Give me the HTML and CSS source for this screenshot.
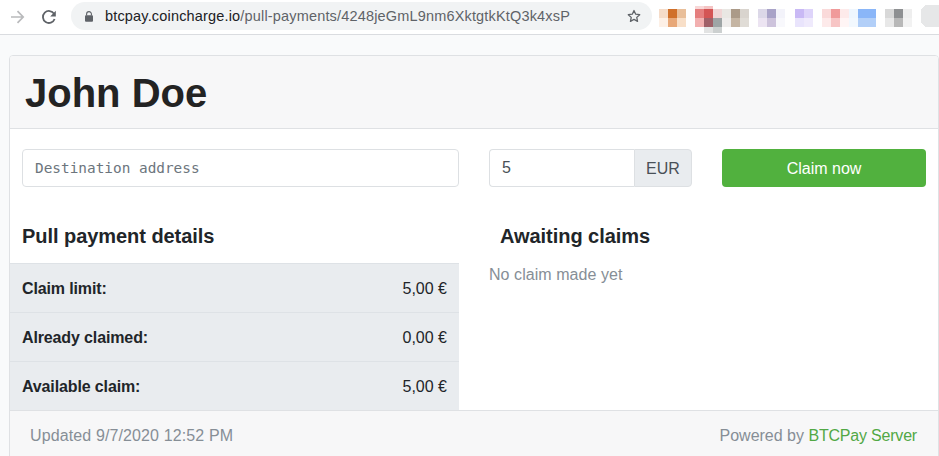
FILE: index.html
```html
<!DOCTYPE html>
<html lang="en">
<head>
<meta charset="utf-8">
<title>John Doe</title>
<link rel="stylesheet" href="styles.css">
</head>
<body>
<div class="toolbar">
  <svg class="nav-icon" width="16" height="16" viewBox="0 0 16 16"><path d="M2 8h12M8.5 2.2 14.2 8l-5.7 5.8" fill="none" stroke="#b9babc" stroke-width="1.7"/></svg>
  <svg class="nav-icon reload" width="16" height="16" viewBox="0 0 16 16"><path d="M13.6 10a6 6 0 1 1-.5-5.1" fill="none" stroke="#5f6368" stroke-width="1.8"/><path d="M14.8 1.8v5.6H9.2z" fill="#5f6368"/></svg>
  <div class="omnibox">
    <svg class="lock" width="8" height="11" viewBox="0 0 8 11"><path d="M1.6 4.5V3a2.4 2.4 0 0 1 4.8 0v1.5" fill="none" stroke="#5f6368" stroke-width="1.1"/><rect x="0" y="4.2" width="8" height="6.6" rx="1" fill="#5f6368"/></svg>
    <span class="url"><span class="host">btcpay.coincharge.io</span>/pull-payments/4248jeGmL9nm6XktgtkKtQ3k4xsP</span>
    <svg class="star" width="14" height="14" viewBox="0 0 24 24"><path d="M12 2.6l2.9 6.3 6.9.8-5.1 4.7 1.4 6.8-6.1-3.4-6.1 3.4 1.4-6.8-5.1-4.7 6.9-.8z" fill="none" stroke="#5f6368" stroke-width="2.2" stroke-linejoin="round"/></svg>
  </div>
  <svg class="extensions" width="280" height="34" viewBox="659 0 280 34" shape-rendering="crispEdges">
    <rect x="659" y="9" width="9" height="9" fill="#f5dcc9"/><rect x="668" y="9" width="9" height="9" fill="#d0702a"/><rect x="677" y="9" width="9" height="9" fill="#e9bf9a"/>
    <rect x="659" y="18" width="9" height="9" fill="#fdf0e6"/><rect x="668" y="18" width="9" height="9" fill="#e8a878"/><rect x="677" y="18" width="9" height="9" fill="#f8dfc8"/>
    <rect x="695" y="6" width="9" height="3" fill="#f8d8d8"/><rect x="704" y="6" width="9" height="3" fill="#f4c4c4"/>
    <rect x="695" y="9" width="9" height="9" fill="#e57f7f"/><rect x="704" y="9" width="9" height="9" fill="#d45555"/><rect x="713" y="9" width="9" height="9" fill="#f0d5d5"/><rect x="722" y="9" width="9" height="9" fill="#e9e7e3"/>
    <rect x="695" y="18" width="9" height="9" fill="#f2b0b0"/><rect x="704" y="18" width="9" height="9" fill="#a06068"/><rect x="713" y="18" width="9" height="9" fill="#9ea5a6"/><rect x="722" y="18" width="9" height="9" fill="#eeeceb"/>
    <rect x="704" y="27" width="9" height="6" fill="#e2e3e3"/><rect x="713" y="27" width="9" height="6" fill="#ccd0d0"/>
    <rect x="731" y="9" width="9" height="9" fill="#ab9a88"/><rect x="740" y="9" width="9" height="9" fill="#d9d4ce"/>
    <rect x="731" y="18" width="9" height="9" fill="#c5b5a3"/><rect x="740" y="18" width="9" height="9" fill="#e0dcd6"/>
    <rect x="758" y="9" width="9" height="9" fill="#dcd8e8"/><rect x="767" y="9" width="9" height="9" fill="#a9a3c8"/><rect x="776" y="9" width="9" height="9" fill="#f3f3fa"/>
    <rect x="758" y="18" width="9" height="9" fill="#ece4f2"/><rect x="767" y="18" width="9" height="9" fill="#cdc3dc"/><rect x="776" y="18" width="9" height="9" fill="#f8f8fc"/>
    <rect x="795" y="9" width="9" height="9" fill="#c9b9f5"/><rect x="804" y="9" width="9" height="9" fill="#ded4fa"/>
    <rect x="795" y="18" width="9" height="9" fill="#e9e4fc"/><rect x="804" y="18" width="9" height="9" fill="#efeafc"/>
    <rect x="822" y="9" width="9" height="9" fill="#fadada"/><rect x="831" y="9" width="9" height="9" fill="#f09a9a"/><rect x="840" y="9" width="9" height="9" fill="#fdeaea"/><rect x="849" y="9" width="9" height="9" fill="#eef6fe"/>
    <rect x="822" y="18" width="9" height="9" fill="#fdeaea"/><rect x="831" y="18" width="9" height="9" fill="#f7c5c5"/><rect x="840" y="18" width="9" height="9" fill="#fff5f5"/><rect x="849" y="18" width="9" height="9" fill="#f2f8fe"/>
    <rect x="858" y="9" width="18" height="9" fill="#8ab6f8"/><rect x="858" y="18" width="18" height="9" fill="#b2cff8"/>
    <rect x="885" y="9" width="9" height="9" fill="#d8d8d8"/><rect x="894" y="9" width="9" height="9" fill="#8e9092"/><rect x="903" y="9" width="9" height="9" fill="#eeeeee"/>
    <rect x="885" y="18" width="9" height="9" fill="#e8e8e8"/><rect x="894" y="18" width="9" height="9" fill="#b8b8b8"/><rect x="903" y="18" width="9" height="9" fill="#f2f2f2"/>
    <rect x="921" y="5" width="30" height="22" rx="7" fill="#e6e7e8"/>
  </svg>
</div>

<main class="page">
  <section class="card">
    <header class="card-header"><h1>John Doe</h1></header>
    <div class="card-body">
      <div class="column">
        <input class="field address" type="text" placeholder="Destination address">
        <h2 class="section-title">Pull payment details</h2>
        <div class="details">
          <div class="detail-row"><strong>Claim limit:</strong><span>5,00 €</span></div>
          <div class="detail-row"><strong>Already claimed:</strong><span>0,00 €</span></div>
          <div class="detail-row"><strong>Available claim:</strong><span>5,00 €</span></div>
        </div>
      </div>
      <div class="column">
        <div class="claim-row">
          <div class="amount">
            <input class="field amount-input" type="text" value="5">
            <span class="currency">EUR</span>
          </div>
          <button class="claim-button" type="button">Claim now</button>
        </div>
        <h2 class="section-title awaiting">Awaiting claims</h2>
        <p class="empty">No claim made yet</p>
      </div>
    </div>
    <footer class="card-footer">
      <span class="updated">Updated 9/7/2020 12:52 PM</span>
      <span>Powered by <a href="#">BTCPay Server</a></span>
    </footer>
  </section>
</main>
</body>
</html>
```
FILE: styles.css
```css
* { box-sizing: border-box; }
html, body {
  margin: 0;
  height: 456px;
  overflow: hidden;
}
body {
  background: #f9fafb;
  color: #212529;
  font-family: "Liberation Sans", Arial, sans-serif;
  font-size: 16px;
  line-height: 24px;
}
.toolbar {
  display: flex;
  align-items: flex-start;
  height: 35px;
  background: #fff;
  border-bottom: 1px solid #dadce0;
}
.nav-icon { margin: 9px 0 0 9px; flex: none; }
.reload { margin-left: 16px; }
.omnibox {
  display: flex;
  align-items: center;
  width: 581px;
  height: 28px;
  margin: 2px 0 0 14px;
  padding: 0 11px 0 14px;
  border-radius: 14px;
  background: #f1f3f4;
  flex: none;
}
.lock { flex: none; }
.url {
  margin-left: 12px;
  font-size: 14.5px;
  letter-spacing: 0.17px;
  color: #5f6368;
  white-space: nowrap;
  flex: 1;
}
.host { color: #202124; }
.star { flex: none; }
.extensions { margin-left: 7px; flex: none; }
.page { padding: 20px 0 0 9px; }
.card {
  background: #fff;
  border: 1px solid #dfe1e4;
  border-radius: 4px 4px 0 0;
  overflow: hidden;
}
.card-header {
  height: 73px;
  padding: 2px 15px 0;
  display: flex;
  align-items: center;
  background: #f7f7f8;
  border-bottom: 1px solid #dfe1e4;
}
h1 {
  margin: 0;
  font-size: 40px;
  line-height: 48px;
  font-weight: 700;
  color: #232323;
}
.card-body {
  display: grid;
  grid-template-columns: 437px 437px;
  column-gap: 30px;
  padding: 20px 12px 0;
}
.column { min-width: 0; }
.field {
  display: block;
  height: 38px;
  border: 1px solid #dde0e3;
  background: #fff;
  color: #495057;
  font-size: 16px;
  outline: none;
}
.address {
  width: 100%;
  padding: 0 12px;
  border-radius: 4px;
  font-family: "DejaVu Sans Mono", monospace;
  font-size: 14.4px;
}
.address::placeholder { color: #6c757d; opacity: 1; }
.section-title {
  margin: 37px 0 15px;
  font-size: 20px;
  line-height: 24px;
  font-weight: 700;
  letter-spacing: -0.05px;
  color: #212529;
}
.details {
  margin-left: -12px;
  background: #e9ecef;
}
.detail-row {
  display: flex;
  justify-content: space-between;
  align-items: center;
  height: 49px;
  padding: 1px 12px 0;
  border-top: 1px solid #dee2e6;
}
.detail-row strong { letter-spacing: -0.13px; }
.claim-row {
  display: flex;
  gap: 30px;
}
.amount {
  display: flex;
  width: 203px;
  flex: none;
}
.amount-input {
  width: 145px;
  padding: 0 12px;
  border-right: 0;
  border-radius: 4px 0 0 4px;
  font-family: "Liberation Sans", Arial, sans-serif;
}
.currency {
  display: flex;
  align-items: center;
  justify-content: center;
  width: 58px;
  padding-top: 1px;
  color: #495057;
  background: #e9ecef;
  border: 1px solid #dde0e3;
  border-radius: 0 4px 4px 0;
}
.claim-button {
  flex: 1;
  height: 38px;
  padding: 2px 0 0;
  border: 0;
  border-radius: 4px;
  background: #51b13e;
  color: #fff;
  font-family: "Liberation Sans", Arial, sans-serif;
  font-size: 16px;
}
.awaiting { padding-left: 11px; }
.empty {
  margin: 1px 0 0;
  letter-spacing: 0.06px;
  color: #868e96;
}
.card-footer {
  display: flex;
  justify-content: space-between;
  padding: 13px 21px 11px 20px;
  background: #f7f7f8;
  border-top: 1px solid #dfe1e4;
  color: #868e96;
}
.updated { letter-spacing: 0.12px; }
.card-footer a {
  color: #51a845;
  letter-spacing: -0.2px;
  text-decoration: none;
}
```
